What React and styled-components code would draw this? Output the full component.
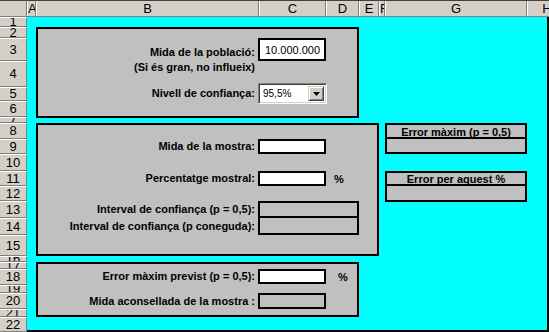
import React from "react";
import styled, { createGlobalStyle } from "styled-components";

const GlobalStyle = createGlobalStyle`
  html, body {
    margin: 0;
    padding: 0;
    overflow: hidden;
    background: #fff;
  }
  body {
    font-family: "Liberation Sans", Arial, sans-serif;
    color: #000;
  }
`;

const Sheet = styled.div`
  width: 549px;
  height: 332px;
  display: grid;
  grid-template-columns: 27px 1fr;
  grid-template-rows: 17px 1fr;
  background: #d4d0c8;
  overflow: hidden;
`;

const Corner = styled.div`
  box-sizing: border-box;
  border-top: 1px solid #404040;
  border-right: 1px solid #808080;
  border-bottom: 1px solid #808080;
`;

const ColHeaders = styled.div`
  display: flex;
  box-sizing: border-box;
  border-top: 1px solid #404040;
  border-bottom: 1px solid #808080;
  overflow: hidden;
`;

const ColHead = styled.div`
  flex: 0 0 ${(p) => p.w}px;
  box-sizing: border-box;
  border-left: 1px solid #fff;
  border-right: 1px solid #808080;
  font-size: 13px;
  line-height: 15px;
  text-align: center;
  overflow: hidden;
  white-space: nowrap;
`;

const RowHeaders = styled.div`
  display: flex;
  flex-direction: column;
`;

const RowHead = styled.div`
  flex: 0 0 ${(p) => p.h}px;
  box-sizing: border-box;
  border-top: 1px solid #fff;
  border-bottom: 1px solid #808080;
  border-right: 1px solid #808080;
  display: flex;
  align-items: center;
  justify-content: center;
  font-size: 13px;
  line-height: 14px;
  overflow: hidden;
`;

const Canvas = styled.div`
  box-sizing: border-box;
  background: #00ffff;
  border-right: 2px solid #000;
  border-bottom: 2px solid #000;
  padding: 10px 0 0 9px;
  display: flex;
  align-items: flex-start;
`;

const LeftColumn = styled.div`
  display: flex;
  flex-direction: column;
`;

const Panel = styled.section`
  box-sizing: border-box;
  width: ${(p) => p.w}px;
  height: ${(p) => p.h}px;
  margin-top: ${(p) => p.mt || 0}px;
  padding-top: ${(p) => p.pt}px;
  border: 2px solid #000;
  background: #c0c0c0;
  display: flex;
  flex-direction: column;
`;

const Field = styled.div`
  display: flex;
  align-items: center;
  height: ${(p) => p.h}px;
  margin-top: ${(p) => p.mt || 0}px;
`;

const Label = styled.label`
  box-sizing: border-box;
  flex: 0 0 220px;
  padding-right: 3px;
  padding-top: ${(p) => p.drop || 0}px;
  text-align: right;
  font-size: 11px;
  font-weight: bold;
  line-height: 13px;
  white-space: nowrap;
`;

const Hint = styled(Label)`
  flex: none;
  width: 220px;
`;

const Cell = styled.div`
  box-sizing: border-box;
  width: ${(p) => p.w}px;
  height: ${(p) => p.h}px;
  border: 2px solid #000;
  border-top-width: ${(p) => (p.joined ? 0 : 2)}px;
  background: ${(p) => (p.white ? "#fff" : "#c0c0c0")};
  font-size: 11px;
  padding-left: 5px;
  display: flex;
  align-items: center;
`;

const Unit = styled.span`
  margin-left: ${(p) => p.gap}px;
  font-size: 11px;
  font-weight: bold;
`;

const Select = styled.div`
  box-sizing: border-box;
  width: 69px;
  height: 21px;
  background: #fff;
  border-top: 1px solid #808080;
  border-left: 1px solid #808080;
  border-right: 1px solid #fff;
  border-bottom: 1px solid #fff;
  box-shadow: inset 1px 1px 0 #404040, inset -1px -1px 0 #d4d0c8;
  display: flex;
  align-items: center;
  justify-content: space-between;
  padding: 2px 2px 2px 4px;
  font-size: 10px;
`;

const DropButton = styled.div`
  box-sizing: border-box;
  width: 16px;
  height: 15px;
  background: #d4d0c8;
  border-top: 1px solid #d4d0c8;
  border-left: 1px solid #d4d0c8;
  border-right: 1px solid #404040;
  border-bottom: 1px solid #404040;
  box-shadow: inset 1px 1px 0 #fff, inset -1px -1px 0 #808080;
  display: flex;
  align-items: center;
  justify-content: center;
`;

const RightColumn = styled.div`
  display: flex;
  flex-direction: column;
  margin: 96px 0 0 6px;
`;

const ResultBox = styled.div`
  display: flex;
  flex-direction: column;
  margin-top: ${(p) => p.mt || 0}px;
`;

const ResultHead = styled(Cell)`
  justify-content: center;
  padding: 1px 0 0;
  font-weight: bold;
`;

const columns = [
  ["A", 9],
  ["B", 223],
  ["C", 67],
  ["D", 33],
  ["E", 20],
  ["F", 6],
  ["G", 142],
  ["H", 40],
];

const rowHeights = [10, 11, 23, 26, 14, 16, 6, 16, 15, 17, 15, 15, 17, 17, 21, 6, 7, 16, 8, 16, 8, 15];

const Arrow = () => (
  <svg width="7" height="4" viewBox="0 0 7 4">
    <path d="M0 0h7L3.5 4z" fill="#000" />
  </svg>
);

export default function App() {
  return (
    <>
      <GlobalStyle />
      <Sheet>
        <Corner />
        <ColHeaders>
          {columns.map(([name, w]) => (
            <ColHead key={name} w={w}>
              {name}
            </ColHead>
          ))}
        </ColHeaders>
        <RowHeaders>
          {rowHeights.map((h, i) => (
            <RowHead key={i} h={h}>
              {i + 1}
            </RowHead>
          ))}
        </RowHeaders>
        <Canvas>
          <LeftColumn>
            <Panel w={323} h={91} pt={9}>
              <Field h={23}>
                <Label drop={5}>Mida de la població:</Label>
                <Cell white w={68} h={23}>
                  10.000.000
                </Cell>
              </Field>
              <Hint as="div">(Si és gran, no influeix)</Hint>
              <Field h={21} mt={9}>
                <Label>Nivell de confiança:</Label>
                <Select>
                  <span>95,5%</span>
                  <DropButton>
                    <Arrow />
                  </DropButton>
                </Select>
              </Field>
            </Panel>

            <Panel w={343} h={133} mt={5} pt={14}>
              <Field h={15}>
                <Label>Mida de la mostra:</Label>
                <Cell white w={68} h={15} />
              </Field>
              <Field h={15} mt={17}>
                <Label>Percentatge mostral:</Label>
                <Cell white w={68} h={15} />
                <Unit gap={8}>%</Unit>
              </Field>
              <Field h={17} mt={15}>
                <Label>Interval de confiança (p = 0,5):</Label>
                <Cell w={101} h={17} />
              </Field>
              <Field h={17}>
                <Label>Interval de confiança (p coneguda):</Label>
                <Cell joined w={101} h={17} />
              </Field>
            </Panel>

            <Panel w={323} h={55} mt={6} pt={5}>
              <Field h={15}>
                <Label>Error màxim previst (p = 0,5):</Label>
                <Cell white w={68} h={15} />
                <Unit gap={12}>%</Unit>
              </Field>
              <Field h={16} mt={9}>
                <Label>Mida aconsellada de la mostra :</Label>
                <Cell w={68} h={16} />
              </Field>
            </Panel>
          </LeftColumn>

          <RightColumn>
            <ResultBox>
              <ResultHead w={142} h={16}>
                Error màxim (p = 0,5)
              </ResultHead>
              <Cell joined w={142} h={15} />
            </ResultBox>
            <ResultBox mt={17}>
              <ResultHead w={142} h={15}>
                Error per aquest %
              </ResultHead>
              <Cell joined w={142} h={16} />
            </ResultBox>
          </RightColumn>
        </Canvas>
      </Sheet>
    </>
  );
}
